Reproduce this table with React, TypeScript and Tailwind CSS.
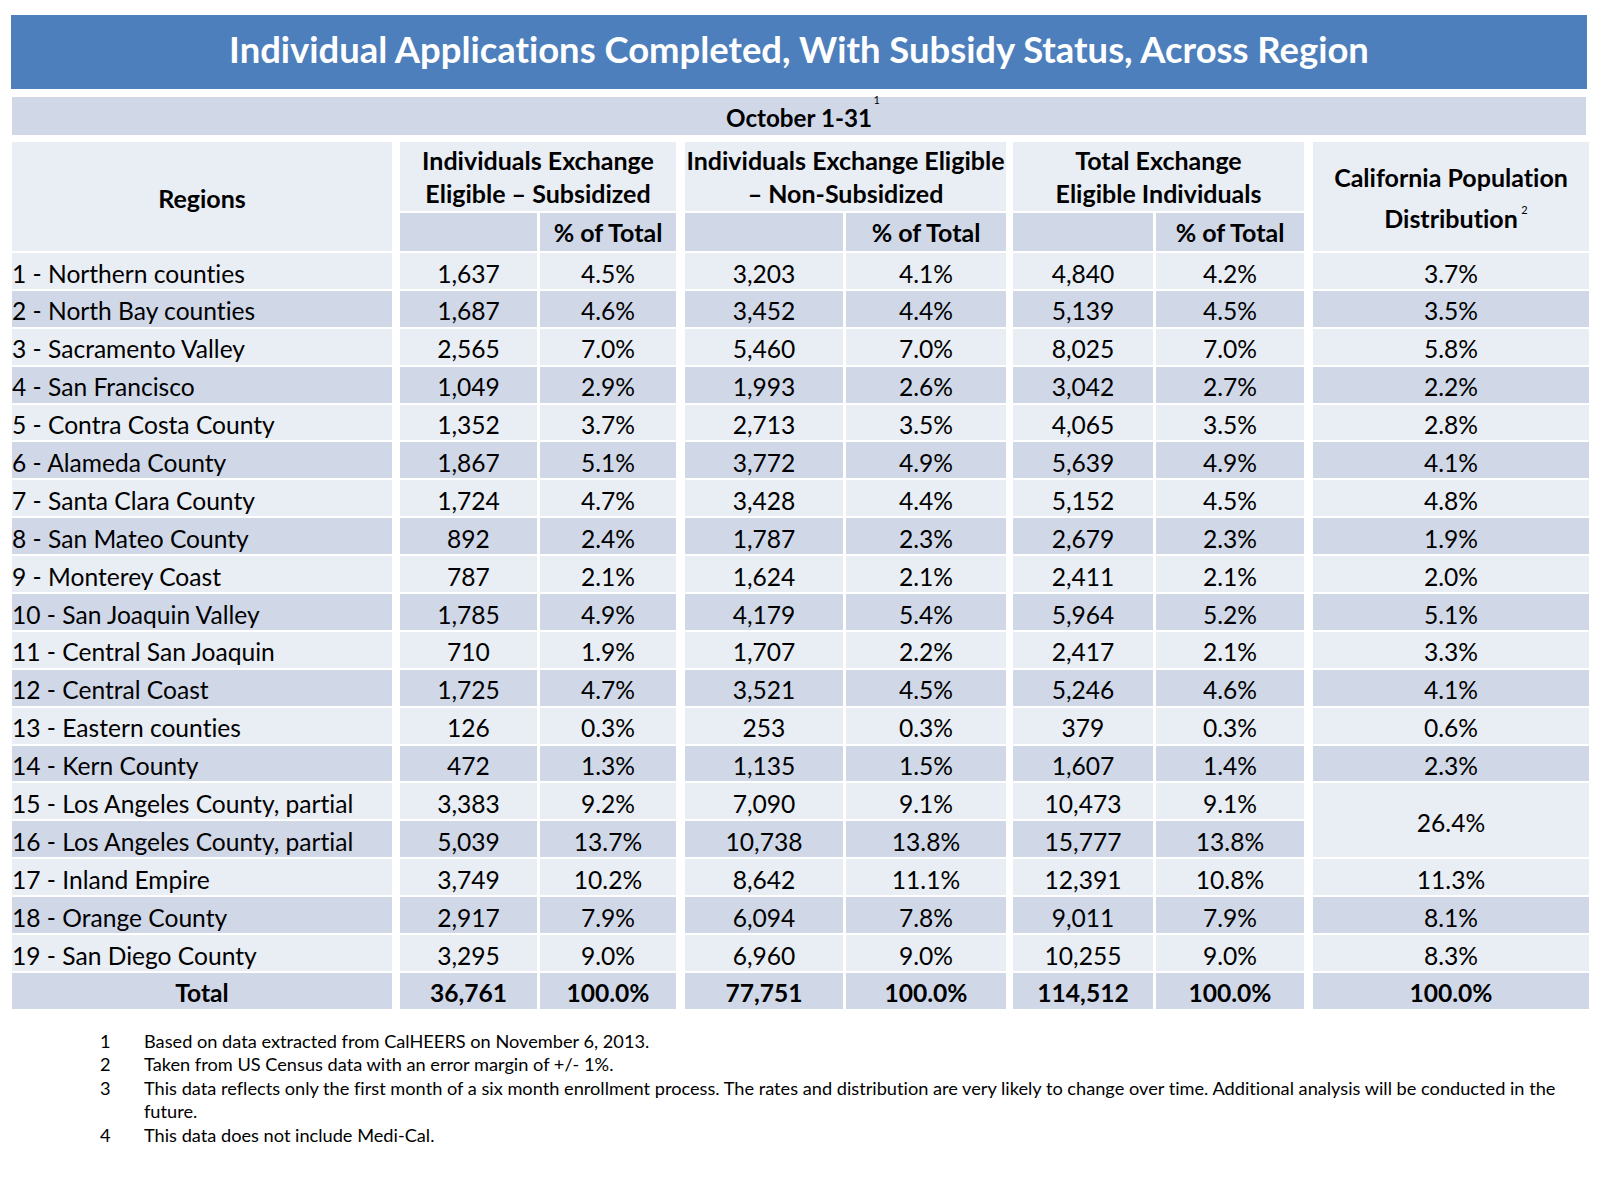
const FONT = "font-['Lato','Liberation_Sans',sans-serif] [font-variant-ligatures:none]";

const ROWS: string[][] = [
  ["1 - Northern counties", "1,637", "4.5%", "3,203", "4.1%", "4,840", "4.2%", "3.7%"],
  ["2 - North Bay counties", "1,687", "4.6%", "3,452", "4.4%", "5,139", "4.5%", "3.5%"],
  ["3 - Sacramento Valley", "2,565", "7.0%", "5,460", "7.0%", "8,025", "7.0%", "5.8%"],
  ["4 - San Francisco", "1,049", "2.9%", "1,993", "2.6%", "3,042", "2.7%", "2.2%"],
  ["5 - Contra Costa County", "1,352", "3.7%", "2,713", "3.5%", "4,065", "3.5%", "2.8%"],
  ["6 - Alameda County", "1,867", "5.1%", "3,772", "4.9%", "5,639", "4.9%", "4.1%"],
  ["7 - Santa Clara County", "1,724", "4.7%", "3,428", "4.4%", "5,152", "4.5%", "4.8%"],
  ["8 - San Mateo County", "892", "2.4%", "1,787", "2.3%", "2,679", "2.3%", "1.9%"],
  ["9 - Monterey Coast", "787", "2.1%", "1,624", "2.1%", "2,411", "2.1%", "2.0%"],
  ["10 - San Joaquin Valley", "1,785", "4.9%", "4,179", "5.4%", "5,964", "5.2%", "5.1%"],
  ["11 - Central San Joaquin", "710", "1.9%", "1,707", "2.2%", "2,417", "2.1%", "3.3%"],
  ["12 - Central Coast", "1,725", "4.7%", "3,521", "4.5%", "5,246", "4.6%", "4.1%"],
  ["13 - Eastern counties", "126", "0.3%", "253", "0.3%", "379", "0.3%", "0.6%"],
  ["14 - Kern County", "472", "1.3%", "1,135", "1.5%", "1,607", "1.4%", "2.3%"],
  ["15 - Los Angeles County, partial", "3,383", "9.2%", "7,090", "9.1%", "10,473", "9.1%", "26.4%"],
  ["16 - Los Angeles County, partial", "5,039", "13.7%", "10,738", "13.8%", "15,777", "13.8%"],
  ["17 - Inland Empire", "3,749", "10.2%", "8,642", "11.1%", "12,391", "10.8%", "11.3%"],
  ["18 - Orange County", "2,917", "7.9%", "6,094", "7.8%", "9,011", "7.9%", "8.1%"],
  ["19 - San Diego County", "3,295", "9.0%", "6,960", "9.0%", "10,255", "9.0%", "8.3%"],
];

const TOTAL = ["Total", "36,761", "100.0%", "77,751", "100.0%", "114,512", "100.0%", "100.0%"];

// first column of each group sits a little further from its neighbour
const COL_GAP = ["", "ml-[5px]", "", "ml-[6px]", "", "ml-[4px]", "", "ml-[6px]"];

const LIGHT = "bg-[#e9edf4]";
const DARK = "bg-[#d0d8e8]";

const NOTES = [
  ["1", "Based on data extracted from CalHEERS on November 6, 2013."],
  ["2", "Taken from US Census data with an error margin of +/- 1%."],
  [
    "3",
    "This data reflects only the first month of a six month enrollment process. The rates and distribution are very likely to change over time. Additional analysis will be conducted in the",
    "future.",
  ],
  ["4", "This data does not include Medi-Cal."],
];

function HeadCell({ children, className = "" }: { children: React.ReactNode; className?: string }) {
  return (
    <div className={`flex items-center justify-center text-center text-[25px] font-bold ${className}`}>
      {children}
    </div>
  );
}

export default function App() {
  return (
    <div className={`w-[1600px] h-[1183px] bg-white text-black ${FONT}`}>
      <div className="pt-[15px] pl-[11px]">
        <div className="flex h-[74px] w-[1576px] items-center justify-center bg-[#4d7fbc] pb-[6px] text-[36.4px] font-bold text-white">
          Individual Applications Completed, With Subsidy Status, Across Region
        </div>
      </div>

      <div className="mt-[8px] ml-[12px] w-[1574px]">
        <div className={`flex h-[38px] items-center justify-center ${DARK} pt-[5px] text-[24.2px] font-bold`}>
          <span className="relative">
            October 1-31
            <span className="absolute -right-[8px] -top-[8px] text-[11px] font-normal">1</span>
          </span>
        </div>

        <div className="mt-[7px] grid grid-cols-[380px_142px_136px_164px_160px_144px_148px_282px] grid-rows-[69px_38px_repeat(20,35.9px)] gap-x-[3px] gap-y-[2px] text-[24.6px]">
          <HeadCell className={`row-span-2 pt-[4px] ${LIGHT}`}>Regions</HeadCell>
          <HeadCell className={`col-span-2 leading-[32.6px] ${COL_GAP[1]} ${LIGHT}`}>
            Individuals Exchange
            <br />
            Eligible – Subsidized
          </HeadCell>
          <HeadCell className={`col-span-2 leading-[32.6px] ${COL_GAP[3]} ${LIGHT}`}>
            Individuals Exchange Eligible
            <br />
            – Non-Subsidized
          </HeadCell>
          <HeadCell className={`col-span-2 leading-[32.6px] ${COL_GAP[5]} ${LIGHT}`}>
            Total Exchange
            <br />
            Eligible Individuals
          </HeadCell>
          <HeadCell className={`row-span-2 leading-[41px] ${COL_GAP[7]} ${LIGHT}`}>
            <span className="mt-[2px]">
              California Population
              <br />
              <span className="relative">
                Distribution
                <span className="absolute -right-[10px] -top-[14px] text-[11px] font-normal">2</span>
              </span>
            </span>
          </HeadCell>
          {[1, 2, 3, 4, 5, 6].map((c) => (
            <HeadCell key={c} className={`pt-[2px] ${COL_GAP[c]} ${DARK}`}>
              {c % 2 === 0 ? "% of Total" : ""}
            </HeadCell>
          ))}

          {ROWS.map((row, r) => {
            const bg = r % 2 === 0 ? LIGHT : DARK;
            return row.map((cell, c) => (
              <div
                key={`${r}-${c}`}
                className={`flex items-center pt-[6px] ${COL_GAP[c]} ${c === 0 ? "justify-start" : "justify-center"} ${
                  r === 14 && c === 7 ? `row-span-2 ${LIGHT}` : bg
                }`}
              >
                {cell}
              </div>
            ));
          })}

          {TOTAL.map((cell, c) => (
            <div
              key={`t-${c}`}
              className={`flex items-center justify-center pt-[6px] font-bold ${COL_GAP[c]} ${DARK}`}
            >
              {cell}
            </div>
          ))}
        </div>
      </div>

      <div className="mt-[21px] pl-[100px] text-[18.2px] leading-[23.5px]">
        {NOTES.map(([n, text, extra]) => (
          <div key={n} className="flex">
            <span className="w-[44px] shrink-0">{n}</span>
            <div>
              <div className="whitespace-nowrap">{text}</div>
              {extra && <div>{extra}</div>}
            </div>
          </div>
        ))}
      </div>
    </div>
  );
}
